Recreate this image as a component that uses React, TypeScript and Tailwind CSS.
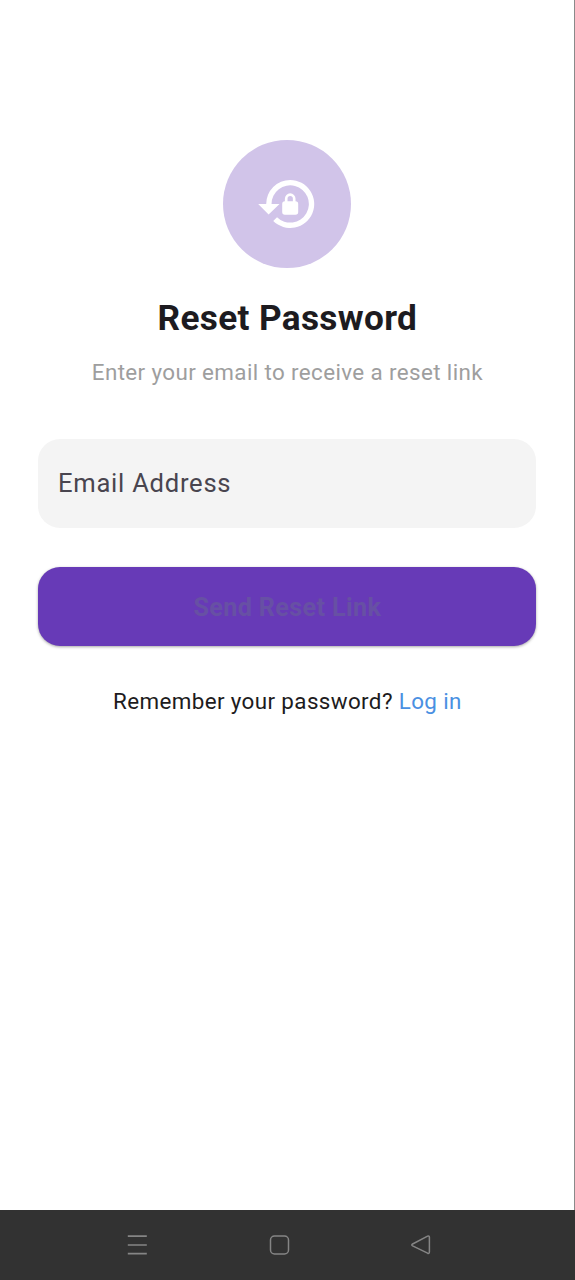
function LockResetIcon() {
  return (
    <svg className="h-[64px] w-[64px]" viewBox="0 0 24 24" fill="#fff">
      <path d="M13.2 3a9 9 0 0 0-9 9h-3l3.9 3.9L9.2 12h-3a7 7 0 1 1 2.06 4.94l-1.42 1.42A9 9 0 1 0 13.2 3zm2 8v-1a2 2 0 0 0-4 0v1a1 1 0 0 0-1 1v3a1 1 0 0 0 1 1h4a1 1 0 0 0 1-1v-3a1 1 0 0 0-1-1zm-1 0h-2v-1a1 1 0 0 1 2 0v1z" />
    </svg>
  );
}

function NavigationBar() {
  return (
    <nav className="flex h-[70px] items-center bg-[#323232] pl-[126px] text-[#858585]">
      <button aria-label="Recent apps" className="h-[22px] w-[22px]">
        <svg viewBox="0 0 22 22" fill="none" stroke="currentColor" strokeWidth="1.7">
          <path d="M1.8 2.2h19M1.8 11h19M1.8 19.6h19" />
        </svg>
      </button>
      <button aria-label="Home" className="ml-[120px] h-[22px] w-[22px]">
        <svg viewBox="0 0 22 22" fill="none" stroke="currentColor" strokeWidth="1.5">
          <rect x="2.5" y="2" width="18" height="18" rx="4" />
        </svg>
      </button>
      <button aria-label="Back" className="ml-[120px] h-[22px] w-[22px]">
        <svg viewBox="0 0 22 22" fill="none" stroke="currentColor" strokeWidth="1.5" strokeLinejoin="round">
          <path d="M2.6 10L17.6 2.1Q19.4 1.4 19.4 3.2V17.8Q19.4 20 17.6 19.2L2.6 11.8Q1 10.9 2.6 10Z" />
        </svg>
      </button>
    </nav>
  );
}

export default function App() {
  return (
    <div className="flex h-[1280px] w-[575px] flex-col bg-white font-['Roboto',sans-serif]">
      <main className="flex flex-1 flex-col items-center border-r border-[#8a8a8a] pt-[140.3px] pr-[37.6px] pl-[38.4px]">
        <div className="flex h-[128px] w-[128px] items-center justify-center rounded-full bg-[#d1c4e9]">
          <LockResetIcon />
        </div>
        <h1 className="mt-[27.7px] text-[35.2px] leading-[44px] font-bold tracking-[0.35px] whitespace-nowrap text-[#1d1b20]">Reset Password</h1>
        <p className="mt-[18px] text-[22.4px] leading-[28px] tracking-[0.38px] whitespace-nowrap text-[#9e9e9e]">Enter your email to receive a reset link</p>
        <div className="mt-[53px] flex h-[89px] w-full items-center rounded-[22px] bg-[#f4f4f4] px-[19.6px] text-[25.6px] tracking-[0.74px] text-[#49454f]">Email Address</div>
        <button className="mt-[38.8px] h-[79.4px] w-full rounded-[22px] bg-[#673ab7] pt-[2px] text-[25.2px] font-bold tracking-[0.36px] text-[#6750a4] shadow-[0_1px_3px_rgba(0,0,0,0.35)]">Send Reset Link</button>
        <p className="mt-[41px] text-[22.4px] leading-[28px] tracking-[0.38px] whitespace-nowrap text-[#1d1b20]">Remember your password? <a className="text-[#4a90e2]">Log in</a></p>
      </main>
      <NavigationBar />
    </div>
  );
}
